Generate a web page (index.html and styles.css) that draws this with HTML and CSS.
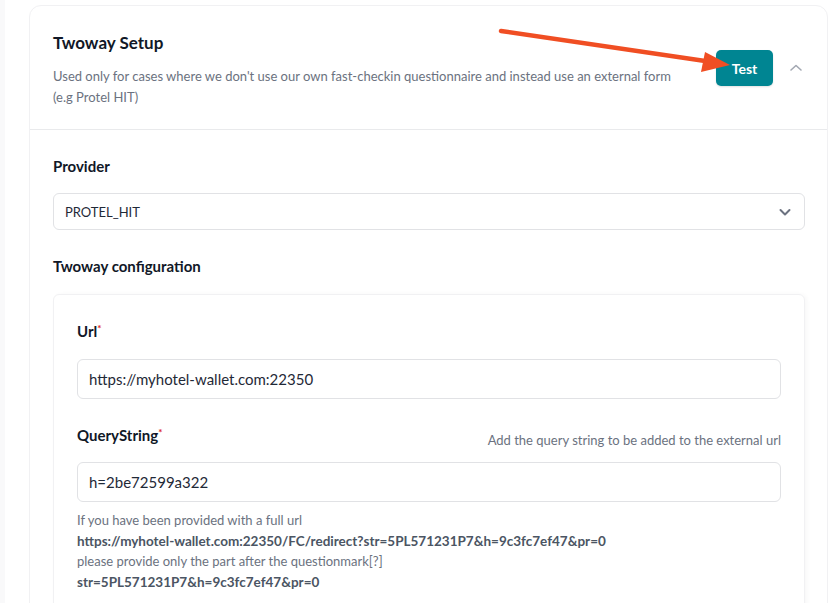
FILE: index.html
```html
<!DOCTYPE html>
<html>
<head>
<meta charset="utf-8">
<link rel="stylesheet" href="styles.css">
</head>
<body>
<div class="page">
  <div class="card">
    <div class="card-header">
      <div class="header-text">
        <h2 class="title">Twoway Setup</h2>
        <p class="desc">Used only for cases where we don't use our own fast-checkin questionnaire and instead use an external form (e.g Protel HIT)</p>
      </div>
      <button class="btn-test">Test</button>
      <svg class="chev-up" width="14" height="10" viewBox="0 0 14 10"><path d="M2 7 L7 2.5 L12 7" fill="none" stroke="#a3a8b2" stroke-width="1.6" stroke-linecap="round" stroke-linejoin="round"/></svg>
    </div>
    <div class="card-body">
      <div class="section-label">Provider</div>
      <div class="select">
        <span>PROTEL_HIT</span>
        <svg width="14" height="10" viewBox="0 0 14 10"><path d="M2.5 3 L7 7.5 L11.5 3" fill="none" stroke="#6b7280" stroke-width="2" stroke-linecap="round" stroke-linejoin="round"/></svg>
      </div>
      <div class="section-label cfg">Twoway configuration</div>
      <div class="inner">
        <div class="field-label">Url<sup class="req">*</sup></div>
        <div class="input">https://myhotel-wallet.com:22350</div>
        <div class="field-row">
          <div class="field-label">QueryString<sup class="req">*</sup></div>
          <div class="hint">Add the query string to be added to the external url</div>
        </div>
        <div class="input">h=2be72599a322</div>
        <div class="help">
          If you have been provided with a full url<br>
          <b>https://myhotel-wallet.com:22350/FC/redirect?str=5PL571231P7&amp;h=9c3fc7ef47&amp;pr=0</b><br>
          please provide only the part after the questionmark[?]<br>
          <b>str=5PL571231P7&amp;h=9c3fc7ef47&amp;pr=0</b>
        </div>
      </div>
    </div>
  </div>
  <svg class="arrow" width="830" height="120" viewBox="0 0 830 120">
    <line x1="501" y1="31" x2="712" y2="62" stroke="#f04e23" stroke-width="4.5" stroke-linecap="round"/>
    <polygon points="730,65 705,52 701,72" fill="#f04e23"/>
  </svg>
</div>
</body>
</html>
```
FILE: styles.css
```css
* { box-sizing: border-box; }
html, body { margin: 0; padding: 0; }
body {
  background: #ffffff;
  font-family: "Source Sans Pro", Lato, "Noto Sans", sans-serif;
  color: #111827;
  width: 830px;
  height: 603px;
  overflow: hidden;
}
.page {
  position: relative;
  padding: 5px 2px 0 5px;
  background: linear-gradient(to right, #f9f9fa 0, #f9f9fa 5px, #ffffff 5px);
  height: 603px;
}
.card {
  margin-left: 24px;
  background: #fff;
  border: 1px solid #f1f1f3;
  border-radius: 12px;
  height: 640px;
}
.card-header {
  display: flex;
  align-items: flex-start;
  padding: 26px 0 21px 23px;
  border-bottom: 1px solid #e9eaec;
}
.header-text { width: 640px; }
.title {
  margin: 0;
  font-size: 17px;
  font-weight: 700;
  line-height: 22px;
  color: #111827;
}
.desc {
  margin: 12px 0 0;
  font-size: 13px;
  line-height: 21px;
  color: #6b7280;
}
.btn-test {
  margin: 18px 0 0 23px;
  width: 57px;
  height: 36px;
  border: none;
  border-radius: 5px;
  background: #008592;
  color: #fff;
  font-family: inherit;
  font-weight: 700;
  font-size: 14px;
  box-shadow: 0 1px 2px rgba(0,0,0,0.12);
}
.chev-up { margin: 31px 0 0 16px; }
.card-body { padding: 26px 22px 0 23px; }
.section-label {
  font-size: 15px;
  font-weight: 700;
  line-height: 20px;
  color: #111827;
}
.select {
  margin-top: 17px;
  height: 37px;
  border: 1px solid #e1e2e5;
  border-radius: 6px;
  display: flex;
  align-items: center;
  justify-content: space-between;
  padding: 0 12px 0 11px;
  font-size: 13px;
  color: #1f2937;
}
.cfg { margin-top: 26px; }
.inner {
  margin-top: 18px;
  border: 1px solid #f1f1f3;
  border-radius: 6px;
  box-shadow: 2px 0 4px rgba(0,0,0,0.03);
  padding: 26px 23px 30px 23px;
}
.field-label {
  font-size: 15px;
  font-weight: 700;
  line-height: 20px;
  color: #111827;
}
.req { color: #dc2626; font-size: 10px; vertical-align: top; position: relative; top: -3px; }
.input {
  margin-top: 18px;
  height: 40px;
  border: 1px solid #e1e2e5;
  border-radius: 6px;
  display: flex;
  align-items: center;
  padding: 0 11px;
  font-size: 15px;
  color: #1f2937;
}
.field-row {
  margin-top: 26px;
  display: flex;
  justify-content: space-between;
  align-items: flex-start;
}
.field-row + .input { margin-top: 14px; }
.hint {
  margin-top: 7px;
  font-size: 13px;
  color: #6b7280;
}
.help {
  margin-top: 8px;
  font-size: 13px;
  line-height: 20.7px;
  color: #6b7280;
}
.help b { color: #4b5563; font-weight: 700; font-size: 13.5px; }
.arrow { position: absolute; left: 0; top: 0; pointer-events: none; }
```
